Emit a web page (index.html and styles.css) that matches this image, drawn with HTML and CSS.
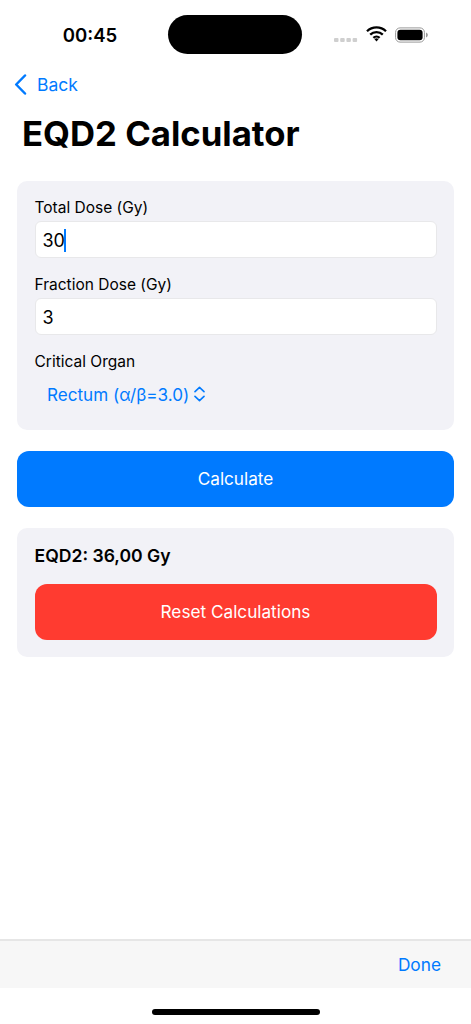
FILE: index.html
```html
<!DOCTYPE html>
<html lang="en">
<head>
  <meta charset="UTF-8">
  <title>EQD2 Calculator</title>
  <link rel="stylesheet" href="styles.css">
</head>
<body>

<div class="screen">

  <!-- Status Bar -->
  <div class="status-bar">
    <div class="status-time">00:45</div>
    <div class="island"></div>
    <div class="status-icons">
      <svg class="signal" width="24" height="4" viewBox="0 0 24 4">
        <rect x="0" y="0" width="4.5" height="4" rx="1"/>
        <rect x="6.2" y="0" width="4.5" height="4" rx="1"/>
        <rect x="12.4" y="0" width="4.5" height="4" rx="1"/>
        <rect x="18.6" y="0" width="4.5" height="4" rx="1"/>
      </svg>
      <svg class="wifi" width="21" height="16" viewBox="0 0 21 16">
        <path d="M1 5.2a13.6 13.6 0 0 1 19 0M4.2 8.6a9 9 0 0 1 12.6 0M7.4 11.9a4.4 4.4 0 0 1 6.2 0" fill="none" stroke="#000" stroke-width="2.3"/>
        <path d="M10.5 15.6l-2-2.4a3 3 0 0 1 4 0z" fill="#000"/>
      </svg>
      <svg class="battery" width="34" height="16" viewBox="0 0 34 16">
        <rect x="0.6" y="0.9" width="28.8" height="14.2" rx="4.4" fill="none" stroke="#999" stroke-width="1"/>
        <rect x="2.4" y="2.7" width="25.2" height="10.6" rx="3" fill="#000"/>
        <path d="M31 5.6c1.2.4 1.8 1.3 1.8 2.4s-.6 2-1.8 2.4z" fill="#999"/>
      </svg>
    </div>
  </div>

  <!-- Nav -->
  <div class="nav-back">
    <svg width="13" height="21" viewBox="0 0 13 21">
      <path d="M11 1.5L2.2 10.5L11 19.5" fill="none" stroke="#007aff" stroke-width="2.5" stroke-linecap="round" stroke-linejoin="round"/>
    </svg>
    <span>Back</span>
  </div>

  <h1 class="page-title">EQD2 Calculator</h1>

  <div class="content">

    <!-- Form -->
    <div class="card form-card">
      <div class="field-label">Total Dose (Gy)</div>
      <div class="field-input">30<span class="caret"></span></div>
      <div class="field-label">Fraction Dose (Gy)</div>
      <div class="field-input">3</div>
      <div class="field-label">Critical Organ</div>
      <div class="picker">
        <span>Rectum (α/β=3.0)</span>
        <svg width="11" height="16" viewBox="0 0 11 16">
          <path d="M1 5.6L5.5 1.4L10 5.6M1 10.4L5.5 14.6L10 10.4" fill="none" stroke="#007aff" stroke-width="1.6" stroke-linecap="round" stroke-linejoin="round"/>
        </svg>
      </div>
    </div>

    <button class="btn btn-blue">Calculate</button>

    <!-- Result -->
    <div class="card result-card">
      <div class="result-text">EQD2: 36,00 Gy</div>
      <button class="btn btn-red">Reset Calculations</button>
    </div>

  </div>

  <!-- Keyboard Toolbar -->
  <div class="toolbar">
    <span class="done">Done</span>
  </div>

  <div class="home-area">
    <div class="home-indicator"></div>
  </div>

</div>

</body>
</html>
```

FILE: styles.css
```css
* {
  box-sizing: border-box;
}

html, body {
  margin: 0;
  padding: 0;
  background: white;
}

body {
  font-family: Inter, "Liberation Sans", sans-serif;
  color: black;
}

.screen {
  width: 471px;
  height: 1024px;
  display: flex;
  flex-direction: column;
  overflow: hidden;
}

.status-bar {
  height: 70px;
  padding-top: 15px;
  display: flex;
  align-items: flex-start;
}

.status-time {
  width: 168px;
  height: 39px;
  padding: 1px 0 0 12px;
  display: flex;
  align-items: center;
  justify-content: center;
  font-size: 18.6px;
  font-weight: 600;
}

.island {
  width: 134px;
  height: 39px;
  background: black;
  border-radius: 20px;
}

.status-icons {
  flex: 1;
  height: 39px;
  padding-left: 32px;
  display: flex;
  align-items: center;
}

.signal {
  fill: #cfcfcf;
  margin-top: 10px;
}

.wifi {
  margin: -1px 0 0 8px;
}

.battery {
  margin-left: 8px;
  margin-top: 0;
}

.nav-back {
  height: 28px;
  padding-left: 14px;
  display: flex;
  align-items: center;
  gap: 10px;
  color: #007aff;
  font-size: 17.5px;
}

.page-title {
  margin: 0;
  padding: 13px 0 0 22px;
  height: 83px;
  font-size: 34.7px;
  line-height: 44px;
  font-weight: 700;
}

.content {
  flex: 1;
  padding: 0 17px;
  display: flex;
  flex-direction: column;
  gap: 21px;
}

.card {
  background: #f2f2f7;
  border-radius: 10px;
  padding: 0 17.5px;
}

.form-card {
  height: 249px;
  padding-top: 17px;
}

.field-label {
  height: 23px;
  line-height: 20px;
  font-size: 15.5px;
}

.field-input {
  height: 37px;
  margin-bottom: 17px;
  padding: 1px 0 0 7px;
  display: flex;
  align-items: center;
  background: white;
  border: 1px solid #e8e8ea;
  border-radius: 6px;
  font-size: 18px;
}

.caret {
  width: 2px;
  height: 23px;
  margin-left: -1px;
  background: #007aff;
}

.picker {
  height: 40px;
  margin-top: -1px;
  padding-left: 12.5px;
  display: flex;
  align-items: center;
  gap: 5px;
  color: #007aff;
  font-size: 17.1px;
}

.btn {
  display: block;
  width: 100%;
  height: 56px;
  padding-bottom: 3px;
  border: none;
  border-radius: 12px;
  color: white;
  font-family: inherit;
  font-size: 17.2px;
}

.btn-blue {
  background: #007aff;
}

.btn-red {
  background: #ff3b30;
}

.result-card {
  height: 129px;
  padding-top: 16px;
}

.result-text {
  height: 40px;
  line-height: 24px;
  font-size: 17.6px;
  font-weight: 600;
}

.toolbar {
  height: 49px;
  padding: 0 30px 1px 0;
  display: flex;
  align-items: center;
  justify-content: flex-end;
  background: #f7f7f7;
  border-top: 2px solid #e6e6e6;
}

.done {
  color: #007aff;
  font-size: 17.3px;
}

.home-area {
  height: 36px;
  padding-top: 21px;
  display: flex;
  justify-content: center;
}

.home-indicator {
  width: 168px;
  height: 6px;
  background: black;
  border-radius: 3px;
}
```
